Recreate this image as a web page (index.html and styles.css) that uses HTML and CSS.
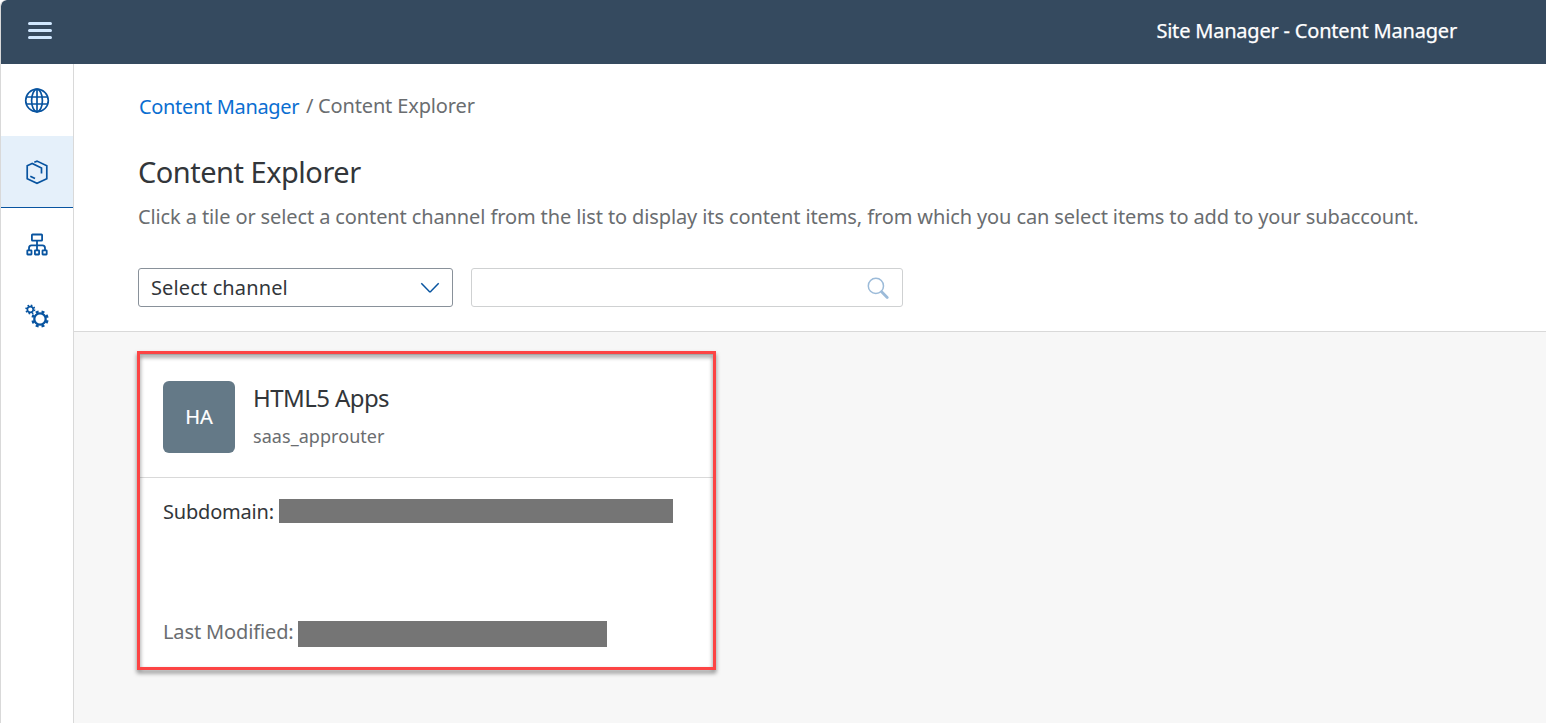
FILE: index.html
```html
<!DOCTYPE html>
<html lang="en">
<head>
<meta charset="utf-8">
<title>Site Manager - Content Manager</title>
<link rel="stylesheet" href="styles.css">
</head>
<body>
<div class="app">
  <header class="shell">
    <svg class="menu" width="26" height="18" viewBox="0 0 26 18" fill="none" stroke="#d1e8ff" stroke-width="3" stroke-linecap="round"><path d="M2.500 1.500H23.500M2.500 8.500H23.500M2.500 15.500H23.500"/></svg>
    <span class="shell-title">Site Manager - Content Manager</span>
  </header>
  <div class="body">
    <nav class="rail">
      <a class="rail-item"><svg width="26" height="26" viewBox="0 0 26 26" fill="none" stroke="#0854a0" stroke-width="1.700"><circle cx="13" cy="13.500" r="11.300"/><ellipse cx="13" cy="13.500" rx="5.400" ry="11.300"/><path d="M13 2.200V24.800M2.300 10H23.700M2.300 17H23.700"/></svg></a>
      <a class="rail-item active"><svg width="26" height="26" viewBox="0 0 26 26" fill="none" stroke="#0854a0" stroke-width="1.700"><path d="M10.300 3.200L13 2.100L22.800 6.700V19.700L13 24.200L3.200 19.700V6.700L8.200 4.400L17.500 9V14.500M6.300 17.200L11 19.500"/></svg></a>
      <a class="rail-item"><svg width="26" height="26" viewBox="0 0 26 26" fill="none" stroke="#0854a0" stroke-width="1.800"><rect x="7.900" y="3.500" width="10.200" height="6.200" rx=".6"/><path d="M13 9.700V19M5 19V17Q5 14.400 7.500 14.400H18.500Q21 14.400 21 17V19"/><rect x="3.300" y="19.300" width="4.200" height="4.200" rx=".4"/><rect x="10.900" y="19.300" width="4.200" height="4.200" rx=".4"/><rect x="18.500" y="19.300" width="4.200" height="4.200" rx=".4"/></svg></a>
      <a class="rail-item"><svg width="26" height="26" viewBox="0 0 26 26" fill="none" stroke="#0854a0"><circle cx="6.300" cy="6.500" r="2.900" stroke-width="1.600"/><circle cx="6.300" cy="6.500" r="4.200" stroke-width="1.700" stroke-dasharray="1.600 1.699"/><circle cx="16" cy="16" r="5.700" stroke-width="2.300"/><circle cx="16" cy="16" r="7.500" stroke-width="2.400" stroke-dasharray="3 2.890" transform="rotate(10 16 16)"/></svg></a>
    </nav>
    <main class="page">
      <section class="head">
        <div class="crumbs"><a class="link">Content Manager</a><span class="slash">/</span><span class="here">Content Explorer</span></div>
        <h1 class="title">Content Explorer</h1>
        <p class="intro">Click a tile or select a content channel from the list to display its content items, from which you can select items to add to your subaccount.</p>
        <div class="filters">
          <div class="select"><span class="select-text">Select channel</span><svg width="20" height="12" viewBox="0 0 20 12" fill="none" stroke="#0854a0" stroke-width="1.500"><path d="M1.300 1.300L9.100 9.300Q10 10 10.900 9.300L18.700 1.300"/></svg></div>
          <div class="search"><svg width="22" height="22" viewBox="0 0 22 22" fill="none" stroke="#9cbbd9"><circle cx="8.900" cy="8.900" r="7.600" stroke-width="1.500"/><path d="M14.600 14.800L20.200 20.400" stroke-width="2.800" stroke-linecap="round"/></svg></div>
        </div>
      </section>
      <section class="tiles">
        <article class="card">
          <div class="card-head">
            <div class="avatar">HA</div>
            <div class="names"><div class="name">HTML5 Apps</div><div class="sub">saas_approuter</div></div>
          </div>
          <div class="row domain"><span class="label-domain">Subdomain:</span><span class="mask mask-domain"></span></div>
          <div class="row modified"><span class="label-modified">Last Modified:</span><span class="mask mask-modified"></span></div>
        </article>
      </section>
    </main>
  </div>
</div>
</body>
</html>
```
FILE: styles.css
```css
* { box-sizing: border-box; }
body { margin: 0; background: #fff; font-family: "Noto Sans", "Open Sans", sans-serif; font-size: 20px; color: #32363a; }
.app { height: 723px; display: flex; flex-direction: column; overflow: hidden; border-left: 1px solid #d9d9d9; border-top-left-radius: 6px; white-space: nowrap; }
.shell { height: 64px; flex: none; background: #354a5f; display: flex; align-items: center; justify-content: space-between; padding: 0 89px 2px 26px; border-top-left-radius: 6px; }
.menu { margin-bottom: 1px; }
.shell-title { color: #fff; line-height: 28px; letter-spacing: -0.2px; -webkit-text-stroke: 0.25px #fff; }
.body { display: flex; flex: 1; min-height: 0; }
.rail { width: 73px; flex: none; border-right: 1px solid #d9d9d9; }
.rail-item { height: 72px; display: flex; align-items: center; justify-content: center; }
.active { background: #e5f0fa; border-bottom: 1px solid #0854a0; }
.page { flex: 1; min-width: 0; display: flex; flex-direction: column; }
.head { height: 268px; flex: none; border-bottom: 1px solid #d9d9d9; padding: 28px 0 0 64px; }
.crumbs { display: flex; height: 28px; line-height: 28px; color: #6a6d70; }
.link { color: #0a6ed1; margin: 1px 7px 0 1px; width: 160px; letter-spacing: -0.33px; }
.slash { width: 5px; margin-right: 7px; }
.here { letter-spacing: -0.14px; }
.title { margin: 32px 0 0; height: 40px; line-height: 40px; font-size: 29px; font-weight: 400; letter-spacing: -0.5px; }
.intro { margin: 11px 0 0; height: 28px; line-height: 28px; color: #6a6d70; letter-spacing: -0.114px; }
.filters { display: flex; gap: 18px; margin-top: 37px; }
.select { width: 315px; height: 39px; border: 1px solid #89919a; border-radius: 3px; display: flex; align-items: center; justify-content: space-between; padding: 0 12px; }
.select-text { letter-spacing: 0.13px; }
.search { width: 432px; height: 39px; border: 1px solid #cfd1d2; border-radius: 3px; display: flex; align-items: center; justify-content: flex-end; padding: 0 13px; }
.tiles { flex: 1; background: #f7f7f7; padding: 19px 0 0 63px; }
.card { position: relative; width: 579px; height: 319px; background: #fff; padding: 3px; }
.card::after { content: ""; position: absolute; inset: 0; border: 3px solid #fc4444; filter: drop-shadow(0 3px 2px rgba(0,0,0,.5)); }
.card-head { height: 124px; border-top: 1px solid #d9d9d9; border-bottom: 1px solid #d9d9d9; display: flex; padding: 26px 0 0 23px; gap: 18px; }
.avatar { width: 72px; height: 72px; border-radius: 6px; background: #647987; color: #fff; display: flex; align-items: center; justify-content: center; padding-bottom: 2px; -webkit-text-stroke: 0.2px #fff; }
.name { height: 34px; line-height: 34px; font-size: 24px; letter-spacing: -0.58px; }
.sub { height: 26px; line-height: 26px; font-size: 18px; color: #6a6d70; margin-top: 8px; letter-spacing: 0.05px; }
.row { display: flex; line-height: 28px; padding-left: 23px; }
.domain { margin-top: 19px; height: 28px; }
.modified { margin-top: 93px; height: 28px; color: #6a6d70; }
.label-domain { width: 116px; padding-top: 1px; letter-spacing: -0.2px; }
.label-modified { width: 135px; letter-spacing: -0.13px; }
.mask { background: #757575; }
.mask-domain { width: 394px; height: 24px; margin-top: 2px; }
.mask-modified { width: 309px; height: 26px; margin-top: 3px; }
```
